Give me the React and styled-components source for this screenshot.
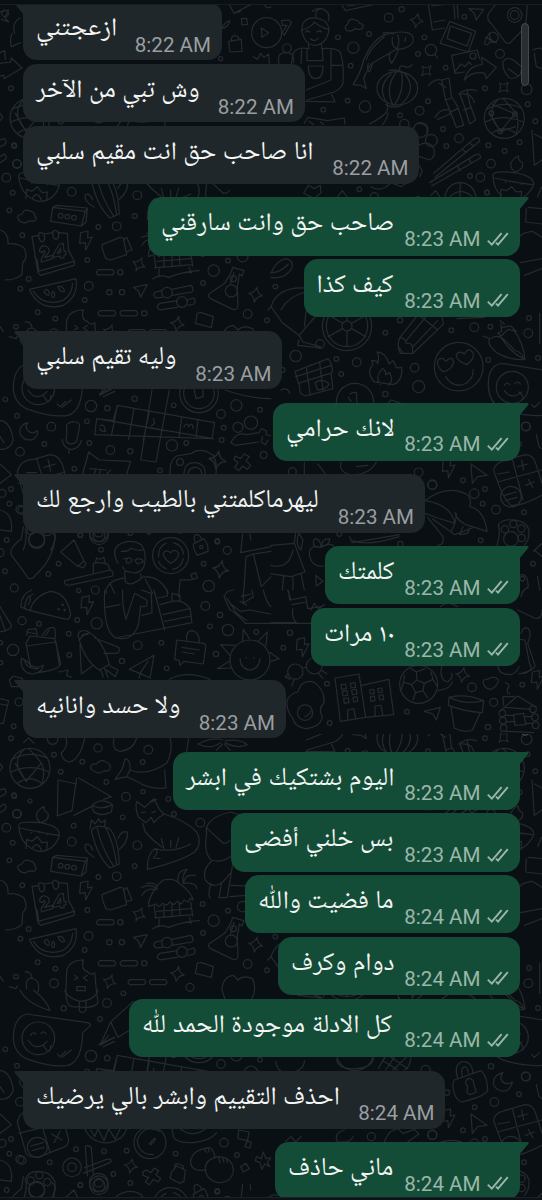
import React from 'react';
import styled, { createGlobalStyle } from 'styled-components';

const messages = [
  { id: 1, text: 'ازعجتني', time: '8:22 AM', width: 198.5, tail: true },
  { id: 2, text: 'وش تبي من الآخر', time: '8:22 AM', width: 281.5 },
  { id: 3, text: 'انا صاحب حق انت مقيم سلبي', time: '8:22 AM', width: 396 },
  { id: 4, text: 'صاحب حق وانت سارقني', time: '8:23 AM', width: 371.5, mine: true, tail: true },
  { id: 5, text: 'كيف كذا', time: '8:23 AM', width: 216, mine: true },
  { id: 6, text: 'وليه تقيم سلبي', time: '8:23 AM', width: 259, tail: true },
  { id: 7, text: 'لانك حرامي', time: '8:23 AM', width: 246.5, mine: true, tail: true },
  { id: 8, text: 'ليهرماكلمتني بالطيب وارجع لك', time: '8:23 AM', width: 401.5, tail: true },
  { id: 9, text: 'كلمتك', time: '8:23 AM', width: 194.5, mine: true, tail: true },
  { id: 10, text: '١٠ مرات', time: '8:23 AM', width: 208.5, mine: true },
  { id: 11, text: 'ولا حسد وانانيه', time: '8:23 AM', width: 262.5, tail: true },
  { id: 12, text: 'اليوم بشتكيك في ابشر', time: '8:23 AM', width: 346.5, mine: true, tail: true },
  { id: 13, text: 'بس خلني أفضى', time: '8:23 AM', width: 288.5, mine: true },
  { id: 14, text: 'ما فضيت واللّٰه', time: '8:24 AM', width: 274.5, mine: true },
  { id: 15, text: 'دوام وكرف', time: '8:24 AM', width: 241.5, mine: true },
  { id: 16, text: 'كل الادلة موجودة الحمد للّٰه', time: '8:24 AM', width: 390.5, mine: true },
  { id: 17, text: 'احذف التقييم وابشر بالي يرضيك', time: '8:24 AM', width: 422, tail: true },
  { id: 18, text: 'ماني حاذف', time: '8:24 AM', width: 244.5, mine: true, tail: true },
];

const Ticks = () => (
  <TickIcon viewBox="0 0 22 15">
    <path d="M.8 8.6 4.8 12.6 14.6 1.2" />
    <path d="M9 10.6 11 12.6 20.8 1.2" />
  </TickIcon>
);

const Tail = ({ mine }) => (
  <TailIcon $mine={mine} viewBox="0 0 10 14">
    <path d={mine ? 'M0 0H8.6Q10.2 .4 9.2 2L0 13Z' : 'M10 0H1.4Q-.2 .4 .8 2L10 13Z'} />
  </TailIcon>
);

const Message = ({ text, time, width, mine, tail }) => (
  <Row $tail={tail} $mine={mine}>
    <Bubble $mine={mine} $tail={tail} $width={width}>
      {tail && <Tail mine={mine} />}
      <Text dir="rtl">{text}</Text>
      <Meta $mine={mine}>
        {time}
        {mine && <Ticks />}
      </Meta>
    </Bubble>
  </Row>
);

const App = () => (
  <Screen>
    <GlobalStyle />
    <Wallpaper />
    <TopEdge />
    <Messages>
      {messages.map((m) => (
        <Message key={m.id} {...m} />
      ))}
    </Messages>
    <Scrollbar />
    <BottomEdge />
  </Screen>
);

export default App;

// ==========================
// Wallpaper
// ==========================

const Dots = ({ list }) => list.map(([x, y, r = 6], i) => <circle key={i} cx={x} cy={y} r={r} />);

const Sparkles = ({ list }) =>
  list.map(([x, y, s = 1, a = 10], i) => (
    <path
      key={i}
      transform={`translate(${x} ${y}) rotate(${a}) scale(${s})`}
      d="M0-24Q4-4 22 0 4 4 0 24-4 4-22 0-4-4 0-24Z"
    />
  ));

const Bolts = ({ list }) =>
  list.map(([x, y], i) => (
    <path key={i} transform={`translate(${x} ${y})`} d="M-16-24 6-29 5-8 19-11-1 28-2 6-19 8Z" />
  ));

const Section = ({ x, y, children }) => (
  <g transform={`translate(${x} ${y}) scale(.3333)`}>{children}</g>
);

const Doodles = () => (
  <g id="doodles" fill="none" stroke="#242a2e" strokeWidth="3.7" strokeLinecap="round" strokeLinejoin="round">
    <Section x={0} y={0}>
      <path d="M688 14 702 40 752 14M702 40 722 34M790 8Q800 30 813 20" />
      <path d="M724 56 740 55 743 73 726 75Z" />
      <circle cx="800" cy="98" r="45" />
      <path d="M784 84 806 98 786 112Z" />
      <path d="M686 124 724 118 726 154 690 156ZM694 120Q694 106 706 107 717 108 716 119M690 63Q680 60 664 86 682 84 690 63M760 170 772 178 782 160 792 172 806 162 808 190" />
      {/* left margin */}
      <path d="M0 36 26 30 14 52 26 66 4 58M60 54Q34 70 44 100M36 100Q28 120 34 140L62 128M0 158 14 152 16 178M0 228 12 226 12 236 66 204 34 174 32 186 0 190" />
      <circle cx="90" cy="355" r="60" />
      <path d="M36 328Q90 300 142 324M32 366Q90 340 148 366M52 400Q90 372 128 402M70 300Q30 340 80 394M86 296Q112 322 126 342 136 370 126 400M46 340 78 394 122 342M0 420 14 416Q22 424 14 434L0 440M0 470 12 462Q22 468 16 478L0 488M0 340 8 352 0 362" />
      <Dots list={[[662, 176, 6], [15, 40, 10], [76, 20, 16], [33, 265, 7], [42, 436, 7], [51, 491, 12]]} />
    </Section>

    <Section x={271} y={0}>
      {/* cook */}
      <path d="M92 90Q94 52 132 54 172 58 174 90M92 90Q100 134 132 136 168 132 174 88 150 84 130 66 120 84 92 90M104 96Q110 90 116 96M138 96Q146 90 152 96M118 116Q132 128 142 114M112 132 114 146M152 130 152 146" />
      <path d="M124 34Q142 20 158 28 180 38 172 62M136 54Q128 30 150 26" />
      <path d="M114 146Q74 140 66 162L60 200M152 146Q200 142 208 158 220 190 216 250 212 264 190 276L108 300M108 146 108 182 156 182 154 146M112 198H156Q156 236 134 236 112 236 112 198M180 150 180 240 106 270M180 278 192 306 104 304M180 196H216M92 150 90 190" />
      <circle cx="48" cy="145" r="13" />
      <path d="M24 190Q16 156 48 158 72 160 68 188" />
      {/* cloud, koi and lantern */}
      <path d="M228 92Q216 82 230 72 234 52 252 60 264 62 266 70 282 72 274 86 262 90 252 86 244 96 228 92ZM32 62 52 60Q68 66 54 80L40 106 34 96 48 76 34 76Z" />
      <path d="M246 254Q268 222 278 180 304 120 342 104 380 92 410 98 430 104 426 126 412 148 376 148L300 192Q288 212 278 234L286 266 270 256ZM286 178Q294 148 340 110M342 104Q330 94 350 98 364 98 368 102M364 112Q360 140 378 146 388 126 380 104M358 156Q350 174 362 190 376 168 382 150M292 190Q286 210 296 216L304 194M404 112 402 124" />
      <ellipse cx="379" cy="265" rx="61" ry="50" />
      <path d="M360 222Q314 264 350 312M376 216Q340 264 366 316M392 218Q402 270 370 316M402 222Q440 268 390 314M354 212Q376 204 404 222M344 314Q370 328 392 316M386 210Q384 196 398 198 412 208 424 194M350 320 348 336Q330 354 296 372M352 340Q344 366 334 374" />
      {/* pictures */}
      <path d="M214 18 224 32 360 2M228 18 336 4M472 12 484 90 520 84M558 10 562 54M482 18 548 10 552 56M488 66 522 60M536 64 614 94 592 156 508 130ZM538 78 602 100 588 138 528 116Z" />
      <path d="M542 166 618 150 626 176M542 166 552 220 580 216M552 214 570 192 582 200 594 186 602 194M580 240Q592 196 634 194L632 172 676 202 646 236 642 220Q604 212 580 240Z" />
      <circle cx="606" cy="168" r="9" />
      <circle cx="480" cy="150" r="17" />
      <path d="M492 162 500 174M594 26 638 28 616 60 610 40Z" />
      <path d="M684 0 652 42Q646 60 662 72L704 128 716 130 760 84Q768 66 768 12M640 130Q650 98 668 96 686 104 680 120 672 132 656 124 650 142 640 130ZM644 112 676 128M656 98Q652 110 664 122M696 188Q700 170 724 178L752 200Q752 240 716 234 694 214 696 188ZM712 206 742 228M786 150Q806 140 813 148M790 160 796 200 813 206" />
      <circle cx="731" cy="45" r="22" />
      <circle cx="731" cy="45" r="13" />
      {/* bamboo */}
      <path d="M472 258Q490 234 512 240L534 234 542 294M512 240 524 300 540 340 556 382 578 376 560 320 544 294M524 262 504 250M524 300 542 294M536 338 560 326M492 352Q510 324 534 330M500 358Q520 350 538 342M566 280 584 330 596 372 614 360 596 310 588 270M564 282Q588 262 616 272M572 282Q604 280 610 308M578 330 600 322" />
      {/* globe */}
      <circle cx="700" cy="355" r="60" />
      <path d="M646 328Q700 300 752 324M642 366Q700 340 758 366M662 400Q700 372 738 402M680 300Q640 340 690 394M696 296Q722 322 736 342 746 370 736 400M656 340 688 394 732 342M690 394 734 380M662 312 734 342" />
      <Dots list={[[661, 340, 7], [688, 394, 7], [732, 342, 7]]} />
      {/* chopsticks and flowers */}
      <path d="M488 520 610 416Q626 408 626 424L492 532M476 548 614 464Q630 458 628 474L482 558M596 430 608 438M574 448 586 458M594 478 600 488M560 500 568 512M440 370Q474 370 468 400M444 436Q470 420 488 444 496 470 476 480L446 470M446 498 454 514 446 530" />
      <circle cx="481" cy="421" r="18" />
      <path d="M783 390 790 496 813 480M790 402 813 414M100 370 110 352 170 362 220 354 222 372M114 364 128 374M148 366 158 374" />
      {/* oil lamp */}
      <path d="M732 516Q716 504 720 488 730 472 742 468 740 480 754 488 760 508 732 516ZM666 528Q664 510 730 518 792 528 788 556 770 592 740 600M666 528Q668 570 692 586M672 534Q720 546 784 554M688 594 690 568 706 572 722 560 736 576 752 574 750 598" />
      <Dots list={[[704, 547, 1], [728, 545, 1], [752, 552, 1]]} />
      <path d="M520 600Q526 548 570 548 612 552 616 600M536 590Q570 560 604 590M568 550 566 600" />
      <path d="M98 580 112 556 130 566 148 556 150 578 130 596ZM300 560Q330 580 360 548L390 560 408 548M200 590 214 572 232 596M480 586 494 572 508 592M450 596Q440 580 430 600" />
      <Dots list={[[353, 53, 13], [392, 28, 8], [294, 102, 7], [201, 112, 7], [247, 143, 17], [239, 197, 7], [230, 302, 7], [282, 320, 17], [157, 329, 7], [387, 346, 7], [446, 332, 13], [471, 304, 7], [441, 162, 7], [460, 112, 7], [524, 203, 7], [580, 50, 7], [687, 161, 13], [642, 265, 7], [767, 268, 16], [770, 313, 7], [516, 387, 7], [564, 415, 13], [526, 438, 7], [652, 436, 7], [701, 453, 7], [660, 491, 13], [597, 528, 7], [628, 532, 13], [746, 427, 7], [793, 364, 7], [648, 577, 7], [449, 390, 22], [400, 372, 14], [265, 568, 7], [310, 590, 12]]} />
      <Sparkles list={[[437, 62, 0.9], [466, 212, 0.85, 45], [698, 262, 0.85, 45]]} />
    </Section>

    <Section x={0} y={140}>
      {/* lamp */}
      <path d="M122 98Q106 86 110 70 120 54 132 50 130 62 144 70 150 90 122 98ZM56 108Q54 92 120 98 182 108 178 138 160 186 116 184 62 170 56 108ZM60 114Q110 126 176 136M78 176 80 148 96 154 112 140 126 158 142 156 140 180M96 176Q112 150 124 180" />
      <Dots list={[[94, 128, 1], [118, 126, 1], [142, 133, 1]]} />
      {/* cactus */}
      <path d="M274 122Q290 98 328 116 354 140 358 222L330 234Q292 200 274 122ZM292 114Q302 170 342 230M316 112Q342 160 350 224M270 116 274 90 286 102 296 86 302 98 316 90 314 110M282 202Q250 182 256 164 270 158 278 180M354 146Q364 120 382 126 386 154 358 178M276 46Q304 20 338 44L334 66Q300 82 280 64ZM276 46Q304 62 338 44M174 -30 172 78 216 62 230 -36M222 76 274 50M174 -30 230 -18M236 -36 334 20 310 28" />
      {/* fox */}
      <path d="M410 34 434 52 462 26 478 58 492 72Q472 84 462 98L454 82 438 98 416 82Q404 54 410 34ZM428 100 436 126Q456 150 486 172M492 72Q560 92 590 126 608 160 584 186 542 214 442 238 442 190 464 176 520 190 572 162M464 176Q480 186 460 204L480 206M484 146 492 176M512 150 512 172M536 144 528 172M424 68 436 66M456 68 466 64M452 36 470 28" />
      {/* small box and cloud */}
      <path d="M158 202 256 214 244 258 152 244ZM158 202 170 196 262 204 256 214M262 204 258 246 244 258M56 240Q46 226 66 222 72 206 88 212 106 218 104 228 116 240 98 244 86 240 78 248 66 250 56 240Z" />
      <Dots list={[[182, 227, 7], [202, 230, 7], [222, 233, 7]]} />
      {/* calendar */}
      <path d="M96 290 116 286M132 282 158 278M176 278 202 280 206 332 224 366 222 376 122 406 114 398 96 290M114 394 222 364M104 350 112 362 116 392M116 280Q126 274 132 284 138 300 126 306 116 304 116 280ZM158 276Q166 266 174 276 180 294 168 298 158 296 158 276Z" />
      <path d="M118 334Q120 316 136 318 152 324 146 338L134 352 158 346V356L124 366V356L136 336Q134 328 126 338ZM160 344 178 312 190 310 192 334 198 334V344L192 346V354H182L180 348 160 352ZM172 340 182 324V338Z" />
      <Bolts list={[[258, 302]]} />
      <path d="M306 314 360 292 370 294 380 344 332 360 318 356Q306 330 306 314ZM370 302 380 292 396 330 382 334" />
      {/* beach hut */}
      <path d="M446 336Q460 292 490 270 526 264 540 282 570 302 580 330L570 326 564 336 552 330 544 342 532 334 522 344 510 336 500 346 488 340 478 350 466 342 446 350ZM462 348 468 384M572 336 578 378M464 384 578 374M478 388 476 410M568 382 574 400M458 416Q480 402 506 412 560 392 598 392M470 364 572 356M492 346V382M516 342V380M538 340 540 376M424 292Q450 280 472 296M426 316Q440 290 470 300M440 280Q464 276 472 290M534 278Q530 240 562 238 544 254 550 280M550 280Q554 252 586 256M552 280Q590 276 590 296" />
      {/* controls */}
      <path d="M296 389H338Q346 397 338 405H294Q284 397 296 389ZM300 512H342Q352 520 342 528H300Q288 520 300 512ZM366 512H408Q418 520 408 528H366Q354 520 366 512ZM390 569H432Q442 576 432 584H390Q378 576 390 569ZM454 569H496Q506 576 496 584H454Q442 576 454 569Z" />
      <path d="M400 442 442 434 422 472 416 454ZM486 452 466 456Q456 466 468 474L488 472M516 448 572 436Q584 446 576 456L516 466M532 482 480 490Q464 502 480 510L532 502M562 480 580 474Q590 482 582 492L564 496" />
      <circle cx="501" cy="458" r="16" />
      <circle cx="546" cy="486" r="16" />
      <path d="M698 382 732 392 726 408 718 402 712 440 714 498Q712 514 694 506L632 476Q620 466 630 460L674 430 694 396ZM702 398 692 430" />
      <circle cx="694" cy="453" r="18" />
      <circle cx="700" cy="416" r="9" />
      {/* watermelon */}
      <path d="M88 448 228 416Q236 470 190 496 118 516 88 448ZM100 454Q130 500 188 482 216 466 218 430M132 456Q140 440 148 458 148 476 132 456ZM158 454Q168 460 162 472 150 474 158 454ZM174 440Q190 436 194 454 182 460 174 440Z" />
      {/* tree and tent */}
      <path d="M0 270Q26 276 24 312 48 308 72 324 86 352 68 368 66 400 66 404 44 420 16 420 0 420M36 376Q34 352 0 350M0 420 18 418V446L84 522 0 534M0 468Q12 464 24 472L40 470" />
      {/* ice cream */}
      <path d="M198 600 200 540Q210 510 250 510 242 540 262 544 270 558 284 548L290 610 294 636Q290 650 260 652L216 650Q196 646 198 600M224 556 234 564 222 570M262 556 250 564 262 572M230 590H256V602H230ZM590 532Q588 516 604 518L640 530 634 562 586 550ZM0 560 10 574M28 590 48 596 52 588M80 596Q74 566 96 564 122 572 114 606M76 546Q92 544 96 562M666 600Q668 560 700 556 712 568 714 570 730 554 758 566 772 600 754 630L714 660 676 630Z" />
      {/* tulip lady */}
      <path d="M620 130Q612 86 690 66L740 80M618 112 670 160Q684 160 690 150M620 130Q610 190 634 210 662 220 690 200M634 214Q606 240 616 270 650 310 690 250M700 210 682 322 657 324 664 280M692 286 740 288M632 280Q622 322 632 324M690 320 740 316M804 510 813 500" />
      <Dots list={[[43, 18, 7], [90, 33, 6], [51, 72, 13], [19, 113, 13], [38, 158, 7], [28, 211, 7], [67, 286, 7], [215, 155, 13], [221, 107, 7], [368, 82, 7], [378, 20, 13], [429, 5, 6], [505, 27, 7], [522, 72, 7], [601, 98, 13], [412, 166, 13], [404, 228, 7], [350, 259, 13], [295, 261, 7], [262, 360, 7], [361, 397, 8], [86, 417, 7], [61, 446, 7], [266, 438, 13], [254, 480, 7], [328, 457, 8], [366, 457, 8], [433, 520, 8], [113, 517, 7], [166, 536, 7], [48, 560, 7], [162, 580, 13], [608, 342, 7], [641, 392, 17], [684, 362, 7], [609, 429, 7], [743, 522, 13], [801, 541, 7], [570, 592, 12], [728, 350, 16]]} />
      <Sparkles list={[[417, 373, 0.9, 25], [329, 575, 0.9, 20], [532, 552, 0.95], [767, 464, 0.95]]} />
    </Section>

    <Section x={271} y={190}>
      <path d="M0 250Q16 212 44 206 70 212 62 236 40 270 0 262M4 248Q30 246 52 222M0 350Q20 290 100 294M0 350 34 398 84 436 150 360M30 360Q50 320 102 306M84 436 96 456 148 470M106 360 100 410M84 450 80 466 150 474" />
      <circle cx="147" cy="462" r="13" />
      <circle cx="228" cy="408" r="74" />
      <circle cx="228" cy="408" r="62" />
      <circle cx="228" cy="408" r="15" />
      <path d="M228 393V346M228 423V470M215 400 174 376M242 400 282 378M215 416 172 440M242 416 284 440" />
      <path d="M386 444 460 350Q520 354 516 404L426 490 388 490Q376 468 386 444ZM386 444Q402 440 406 460 426 458 424 476L426 490M404 454 470 374M424 472 500 392M440 372 500 420M384 472 396 490M558 386 640 382M806 370V460" />
      {/* gift */}
      <path d="M72 544 172 506Q186 526 184 548L82 580 72 544ZM84 580 88 610 104 618 186 596 180 550M106 532 118 616M146 516 156 600M74 560 182 526M132 578Q156 562 174 582 168 598 140 600Z" />
      {/* fire */}
      <path d="M310 576Q284 546 306 524L302 512Q320 510 320 522 326 498 318 486 344 488 354 522L366 512Q372 520 376 534L392 532Q396 574 366 584ZM328 584Q310 560 334 536 344 538 344 554L356 548Q370 572 352 586" />
      {/* heart eyes */}
      <circle cx="563" cy="530" r="73" />
      <path d="M518 546Q496 532 500 512 512 498 524 514 544 496 548 516 544 538 518 546ZM588 524Q556 514 556 494 566 480 580 492 594 470 606 488 612 506 588 524ZM524 560Q548 598 586 580 610 560 606 538" />
      {/* chilies */}
      <path d="M636 438 656 446Q650 460 660 470 680 504 756 510 760 490 730 480 706 454 690 442 672 434 660 446M690 402 692 424 680 430 690 438 712 418 736 424 720 408 694 412M690 442Q720 490 762 508 758 460 728 420M700 402 688 392" />
      <path d="M813 540 694 520Q650 524 652 590 656 640 692 658 750 680 813 676" />
      <circle cx="724" cy="592" r="48" />
      <path d="M700 586Q708 574 716 584M732 580Q742 572 748 582M700 602Q720 632 752 606M744 606Q764 624 752 630M782 644 790 652 806 638" />
      <circle cx="252" cy="636" r="56" />
      <path d="M236 612Q246 606 256 608L258 640M232 622 240 634M30 600Q50 590 56 610" />
      <path d="M740 152Q744 128 784 124L813 142M772 52 813 56M766 56 764 96 813 102M800 20 812 -8M748 218 813 206M760 256 813 236" />
      <Dots list={[[74, 498, 17], [257, 517, 13], [196, 507, 7], [211, 552, 7], [343, 428, 7], [431, 533, 13], [443, 590, 18], [541, 421, 7], [610, 412, 13], [658, 410, 7], [652, 510, 7], [774, 384, 7], [772, 430, 13], [801, 504, 7], [13, 290, 7], [387, 391, 8], [35, 540, 7], [343, 612, 8], [648, 8, 7]]} />
    </Section>

    <Section x={0} y={390}>
      {/* crossword */}
      <path d="M352 46 644 98 636 146 284 134 290 86 340 92ZM352 46 334 138M402 56 386 148M456 0 422 210 468 216 508 0M448 64 430 150M545 82 538 140M594 90 588 142M290 86 640 146M340 94 494 122" />
      <path d="M300 108Q314 98 316 124 302 126 300 116M460 86 464 100 454 108M552 110Q560 94 566 110 576 92 580 116M298 12 344 -8M310 20 344 4" />
      <circle cx="597" cy="10" r="58" />
      <circle cx="597" cy="10" r="46" />
      <path d="M582 -4 608 -8 610 20 588 26Z" />
      {/* mic, moon and numbers */}
      <path d="M84 98Q56 104 60 132 74 156 100 148 116 136 112 122 98 134 86 124 72 112 84 98ZM200 104Q212 92 228 96 242 100 238 114L230 154Q218 166 206 160 194 154 200 138ZM186 148Q192 180 218 178 240 172 244 152M208 180 206 190M0 92Q30 92 40 150 30 180 0 178M0 140 12 158" />
      <path d="M52 246Q60 210 100 208L150 194Q186 196 194 252L206 300Q206 320 180 326L120 350Q90 356 78 340L52 246M110 206 150 336M80 248H110M132 232 166 222M144 208 152 244M56 280 196 246M154 282 186 300M180 274 162 308M0 222 34 254 0 280" />
      <circle cx="112" cy="322" r="30" />
      <path d="M92 318 130 308M96 332 132 322" />
      <path d="M248 252 266 186 298 210 344 212 392 214 380 252M270 236 320 240M288 238 282 252M302 240 298 252M332 240 320 252" />
      <path d="M510 252Q508 210 530 198L576 190Q590 176 618 184L640 196Q652 220 648 252M552 252Q554 214 588 218 616 222 616 252M564 252Q568 230 588 232 604 234 606 252M704 142 692 158 706 166 776 156M704 142Q716 126 740 134L776 128 786 116 800 124 798 134 812 138M788 140 784 156 796 164 804 150" />
      <path d="M706 198 722 206 732 192 748 200 738 212 752 226 742 238 728 228 716 242 704 232 714 218 702 208ZM676 0Q740 24 813 26M0 360Q40 370 34 424L0 420" />
      {/* trowel, tube and toothbrush */}
      <path d="M70 410 64 446Q30 470 32 492L86 566Q100 568 106 556 160 508 166 440L156 428M182 486 222 450 252 512 234 530ZM232 526 250 534 258 520M250 512 258 520M194 572 330 540Q342 544 338 558L206 586Q190 584 194 572ZM280 548V520Q300 514 324 524L330 540M286 518 290 504 300 508 312 502 316 520" />
      <circle cx="110" cy="448" r="24" />
      {/* boy */}
      <path d="M354 520Q334 484 354 466 390 444 424 464 442 490 432 530 416 556 390 546 372 546 368 530M364 484Q384 486 394 474 414 486 432 478M372 506H382M382 504Q394 500 396 512 388 524 378 516ZM404 510 414 506 426 508 430 516 412 522ZM374 546 376 574Q390 594 424 564L422 552M376 564Q318 570 318 610M424 562Q480 554 504 610M436 568 458 610M330 580 344 610" />
      <circle cx="512" cy="497" r="54" />
      <path d="M476 500Q474 470 498 460M520 458Q548 466 550 492M550 506Q544 534 518 538M498 536Q480 528 476 514M512 520Q490 506 490 490 496 476 512 488 526 474 536 490 536 508 512 520Z" />
      <path d="M580 462 612 446Q626 464 624 484L592 496Q580 480 580 462ZM586 458Q576 432 592 434 604 438 604 450" />
      <circle cx="604" cy="471" r="5" />
      <path d="M728 432 722 488 813 470M750 432 752 450M732 600 738 500 760 492 784 590 813 560M760 492 813 484M572 554 588 548 592 564 578 568ZM574 570H540L536 620" />
      <circle cx="753" cy="98" r="20" />
      <circle cx="714" cy="112" r="15" />
      <circle cx="297" cy="436" r="18" />
      <circle cx="297" cy="436" r="28" />
      <Dots list={[[16, 28, 7], [51, 77, 7], [154, 110, 13], [133, 162, 7], [60, 185, 13], [273, 48, 17], [322, 55, 8], [261, 94, 7], [268, 159, 7], [331, 180, 13], [391, 184, 8], [404, 26, 8], [516, 166, 17], [521, 46, 7], [559, 159, 7], [663, 72, 13], [709, 46, 17], [780, 59, 7], [671, 113, 7], [665, 150, 7], [791, 195, 10], [480, 241, 7], [540, 216, 10], [223, 236, 7], [33, 297, 7], [6, 310, 12], [20, 450, 7], [0, 488, 12], [15, 544, 7], [145, 552, 7], [176, 521, 7], [303, 479, 7], [241, 435, 7], [652, 453, 7], [682, 481, 12], [611, 521, 7], [626, 588, 17], [43, 594, 12], [60, 358, 12]]} />
      <Sparkles list={[[652, 210, 1.15], [662, 538, 1.1]]} />
    </Section>

    <Section x={0} y={340}>
      {/* speech bubble with a face */}
      <path d="M80 72 262 98Q276 102 268 110L248 128Q246 214 204 226 160 234 84 208 40 190 40 140 42 82 80 72ZM172 192 180 200 198 184M186 202 214 180" />
      <circle cx="115" cy="145" r="49" />
      <path d="M92 136Q98 124 108 132M122 130Q132 120 138 132M84 150Q108 188 142 154M130 166 142 184Q154 184 152 166" />
      <path d="M194 0Q200 24 240 34 286 30 294 0M238 34V62Q248 74 258 60V32M60 0Q80 40 150 62 140 30 100 0M400 34 332 96 354 142 390 120M332 96 300 166 344 142M302 164 326 136" />
      <path d="M254 416Q276 462 330 458 372 448 380 416M272 420 284 440 294 416 312 452 326 416 346 448 360 416M516 416 520 440Q530 460 580 458 632 452 650 428M540 416Q580 446 616 416" />
      <circle cx="450" cy="458" r="48" />
      <path d="M480 424Q430 400 412 450 414 494 460 494M448 462 462 446Q470 442 462 454L452 464Z" />
      {/* scissors */}
      <path d="M256 470Q264 462 274 474L280 552M256 470 262 558M252 534 320 508Q340 506 330 518L250 550" />
      <circle cx="216" cy="532" r="28" />
      <circle cx="216" cy="532" r="13" />
      <circle cx="296" cy="578" r="28" />
      <circle cx="296" cy="578" r="13" />
      <path d="M440 540 452 548 464 534 476 542 468 554 482 566 474 576 460 568 448 584 436 576 446 562 428 556 430 544ZM516 544 530 528 556 540 552 574 538 580 510 564ZM524 532Q522 520 536 522 554 526 550 538" />
      {/* dumplings */}
      <path d="M618 540Q570 548 572 510 580 482 612 476 640 464 644 500M616 534Q618 506 656 500 702 504 700 548 690 580 654 578 616 568 616 534ZM612 476 620 488M624 474 628 486M656 500 660 518M668 504 672 516M680 504 682 518" />
      <path d="M716 420 748 426 742 452 714 446ZM742 452 754 458 750 474 734 470ZM722 530 738 520 748 536 730 546ZM770 500 784 506 790 486 798 506 812 504 802 518 810 530 794 522 786 538 780 518 766 512Z" />
      {/* paw */}
      <path d="M70 630Q84 590 76 568 84 544 114 544 152 544 164 574 170 600 152 630" />
      <circle cx="110" cy="601" r="24" />
      <Dots list={[[92, 572, 11], [118, 556, 11], [142, 576, 11]]} />
      <Dots list={[[228, 478, 7], [312, 484, 7], [380, 482, 7], [340, 552, 7], [241, 586, 7], [391, 579, 7], [527, 491, 7], [711, 495, 7], [672, 458, 13], [149, 517, 7], [66, 511, 12], [28, 491, 7], [321, 39, 13], [370, 10, 7], [191, 55, 8], [300, 87, 7], [652, 605, 7]]} />
      <Sparkles list={[[393, 528, 0.9]]} />
    </Section>

    <Section x={271} y={340}>
      {/* padlock */}
      <path d="M550 270 630 242Q650 260 650 302 640 320 572 336 556 330 550 310 542 284 550 270ZM560 264Q548 228 570 216 602 210 606 248M574 258Q568 234 580 230 592 232 592 250M590 290Q578 276 590 266 608 264 608 280L616 306 598 314 588 308Z" />
      <path d="M696 248Q664 256 668 284 680 308 708 302 722 290 724 276 704 288 692 272 686 260 696 248Z" />
      <Bolts list={[[533, 386]]} />
      <path d="M600 372 648 406 620 410 604 430Z" />
      <path d="M668 392Q670 370 700 362L762 344Q786 344 794 370L813 430M668 392 690 452Q696 470 720 496 750 500 813 466M724 356 756 480M680 402 716 396M680 426 813 390M740 380 770 372M752 360 758 390M764 436 790 426M772 418 786 444" />
      <path d="M322 236Q340 200 360 180L420 200Q416 236 400 240M336 212 380 240M350 194 410 236M380 188 344 240M408 200 366 240M14 214Q20 254 60 248 100 240 100 212M196 210Q206 240 250 236 300 236 308 204M340 456Q352 420 380 416L396 430 430 418 444 432 410 456M220 420Q186 430 200 456 240 460 246 440M44 454 60 440 74 456 90 440" />
      <Dots list={[[528, 308, 8], [660, 229, 8], [764, 259, 13], [744, 313, 7], [670, 336, 13], [611, 352, 7], [484, 435, 13], [576, 421, 7], [301, 440, 12], [464, 240, 14]]} />
    </Section>

    <Section x={271} y={390}>
      <path d="M796 134 804 170 813 176" />
      <circle cx="720" cy="320" r="31" />
      <path d="M700 316 736 306M704 332 738 322" />
      {/* mushrooms */}
      <path d="M462 332Q530 280 592 316 602 334 596 350M596 350Q640 360 648 424L604 410Q560 400 552 368M462 332Q540 344 552 400L500 384 462 370M470 382 516 440Q520 466 500 466M484 386 552 434 604 414M556 370Q556 400 540 424M576 410 566 434 590 430 596 414" />
      {/* paw */}
      <path d="M678 466Q690 430 682 404 696 386 724 390 766 392 774 420 776 450 760 466" />
      <circle cx="720" cy="447" r="22" />
      <Dots list={[[702, 418, 11], [727, 402, 11], [751, 416, 11], [752, 444, 11]]} />
      <path d="M236 440 244 458 386 434M246 452Q290 470 384 440M100 218V250M140 222 162 250M210 216Q200 248 246 256 300 250 316 216M256 230 290 226" />
      {/* apple and dress */}
      <path d="M150 472Q110 462 116 500 126 534 158 528M150 472Q180 456 190 470M150 470Q148 450 138 448 126 440 128 466 140 474 150 470ZM154 468Q150 446 176 446 176 466 154 468M84 430Q70 460 90 480L96 450ZM0 466 70 460 102 546 60 560 0 552M70 460 74 430M0 526Q54 540 66 480M38 556 34 600M66 560V600M90 552 100 600M134 556 156 574 136 588Z" />
      <path d="M790 480 813 500M788 484 813 460M800 560 806 600M746 556Q770 546 772 590" />
      <Dots list={[[443, 247, 13], [484, 284, 14], [610, 311, 14], [642, 297, 7], [635, 341, 7], [675, 359, 13], [629, 451, 7], [759, 367, 7], [765, 110, 13], [205, 432, 7], [388, 462, 8], [786, 521, 7], [754, 566, 7], [64, 245, 12]]} />
    </Section>

    <Section x={0} y={590}>
      {/* taco */}
      <path d="M62 50Q64 10 96 0M62 50 74 56 90 62Q100 20 150 4 200 6 212 72 208 90 200 88L90 62M74 56Q74 20 100 12M84 44Q94 34 90 20" />
      <Dots list={[[176, 58, 2], [188, 44, 2], [194, 60, 2], [236, 2, 6]]} />
      <Bolts list={[[262, 46]]} />
      {/* student and cake */}
      <path d="M314 0Q308 130 350 144 400 156 416 100L422 48M318 52 360 44M368 0Q366 50 378 88L404 10M404 10 440 30Q446 56 422 48M424 0 454 10 456 68 426 76M462 0 494 120M346 144 576 98 570 56 488 74M570 56Q550 28 516 34L480 44M474 24 502 18V0M494 94 574 78M516 34V10L540 16V34" />
      {/* shoe */}
      <path d="M672 20Q680 0 700 0M672 20 690 60Q704 64 736 100H813M690 40 720 64 750 60 813 72M724 20 752 12M730 0V40L760 20M756 0 760 22M720 34 740 46M680 24 710 70 740 92M790 0Q800 40 813 50" />
      <path d="M0 50 34 106Q36 120 0 126M0 76 16 124" />
      {/* backpack */}
      <path d="M78 160 90 138 164 146 182 220Q180 240 110 248M78 160 92 230M78 168 168 156 178 226M80 136 84 118 108 116 112 138M80 126 110 132M126 138Q140 110 162 112 170 130 164 146M136 136 148 120M64 204Q60 250 100 252 128 246 130 226 100 242 82 214 72 210 64 204ZM74 212Q82 240 116 236" />
      {/* rocket */}
      <path d="M234 134Q240 116 262 124 310 150 328 224L298 240Q250 210 234 134ZM246 136Q254 130 264 134M238 152Q244 136 268 128M284 144 356 172Q362 184 350 190L312 190M240 164 244 252 280 226M302 240 310 260M314 236 324 262M330 228 354 240 346 260 320 240" />
      <path d="M388 238 462 196 450 264 420 250ZM420 250 444 214M420 250 418 264M176 246 204 240 200 256 214 262M28 270 40 258 68 266 60 290 34 290Z" />
      <path d="M530 150 612 160Q620 166 616 180L610 222 552 214 540 226 538 212 524 208ZM560 152Q556 122 578 122 598 128 598 156M546 172 598 180M546 186 584 192" />
      {/* sun */}
      <circle cx="750" cy="210" r="60" />
      <path d="M720 206Q722 238 750 240 778 236 780 206M738 202V204M762 202V204M706 166 662 164 690 196M728 152 730 118 748 146M774 154 802 126 798 168M690 212 652 236 692 234M808 190 813 188" />
      <path d="M508 268Q560 240 630 268" />
      <path d="M0 326 26 332 10 400 0 400M0 342 22 346" />
      <Dots list={[[66, 92, 12], [117, 101, 7], [39, 180, 17], [206, 131, 7], [208, 195, 7], [232, 90, 7], [290, 100, 17], [413, 166, 13], [484, 158, 7], [366, 213, 8], [500, 235, 7], [616, 48, 13], [660, 75, 8], [630, 109, 7], [684, 120, 17], [648, 192, 8], [769, 126, 7], [57, 336, 12], [41, 409, 7], [2, 158, 6], [2, 218, 6], [286, 0, 12]]} />
    </Section>

    {/* stocking and whale */}
    <Section x={0} y={-60}>
      <path d="M198 444Q206 470 184 488 184 510 208 516 240 510 254 444M342 444Q334 480 360 484 400 480 410 444M346 568 366 538 376 506Q392 510 390 540 440 560 500 520 520 480 510 444M346 568 380 560 410 574Q450 600 498 594L494 540M390 540 382 556M566 444 560 484M272 536Q270 520 290 522 300 506 318 516 334 522 330 536 326 546 312 542 296 558 272 536Z" />
      <path d="M668 450Q640 440 594 462 630 480 662 458M676 452Q720 446 742 464 710 478 676 458M668 462 650 480M674 462 690 480M70 458 86 444 102 460" />
      <Dots list={[[158, 447, 16], [162, 494, 7], [182, 545, 7], [247, 515, 7], [294, 474, 12], [319, 576, 7], [445, 479, 13], [428, 516, 7]]} />
    </Section>

    <Section x={271} y={590}>
      <path d="M50 0 60 30 104 20 110 56 150 50M66 56Q60 80 76 98H0M0 100H160M56 30 52 0M62 44 106 36M120 60 130 40 142 56 160 44M508 50Q530 30 560 50M750 20Q754 0 770 -8M740 60 790 84Q813 90 813 60" />
      {/* glasses */}
      <circle cx="73" cy="245" r="23" />
      <circle cx="130" cy="228" r="24" />
      <path d="M94 234 106 232M52 252 42 260 58 268M70 268 62 288M150 240 168 252M142 250 156 266" />
      {/* egg */}
      <path d="M90 284Q120 264 140 286 164 310 158 340 140 356 154 380 148 412 104 416 70 410 66 386 44 360 48 330 60 310 80 306ZM102 380Q120 370 120 362" />
      <circle cx="102" cy="368" r="23" />
      {/* houses */}
      <path d="M192 264 264 252 284 382 208 394ZM272 286 354 268 368 374 284 382M230 390V360L248 356 254 386M312 380V348L330 346 336 378M210 284 224 282 226 296 212 298ZM238 280 252 278 254 292 240 294ZM214 304 228 302 230 316 216 318ZM242 300 256 298 258 312 244 314ZM218 326 232 324 234 338 220 340ZM246 322 258 320 260 334 248 336ZM296 300 308 298 310 310 298 312ZM320 296 332 294 334 306 322 308ZM298 320 310 318 312 332 300 334ZM324 316 336 314 338 328 326 330Z" />
      {/* football */}
      <circle cx="443" cy="283" r="57" />
      <path d="M422 284 438 270 460 280 456 302 434 308ZM438 270 436 246 420 236M436 246 462 236M460 280 486 268M486 268 480 246M486 268 498 288M456 302 470 324M434 308 426 330M422 284 398 276 400 256M398 276 390 300M512 230Q504 270 530 276 548 262 542 250M502 302Q540 296 544 276" />
      {/* plant pot and log cabin */}
      <path d="M534 322Q584 310 638 332L634 368Q580 364 532 346ZM534 322Q584 346 638 332M540 352 550 414Q580 430 604 420L628 368M460 364 508 352 496 390 486 372ZM638 282Q634 266 650 268 672 254 682 270 680 290 660 298 644 298 638 282Z" />
      <path d="M696 320H730M696 322 698 346M688 362 740 318 796 352M700 352 780 358M704 376H730M728 374 758 370 764 404 732 406ZM704 396 732 394M762 380H784M764 400H786M702 424 788 428M690 428 682 456 712 452 706 430M704 278Q720 284 710 296 706 310 716 312" />
      <Dots list={[[694, 370, 10], [696, 392, 10], [698, 414, 10], [786, 358, 10], [792, 382, 10], [794, 406, 10]]} />
      <Bolts list={[[95, 172], [800, 270]]} />
      <path d="M0 190 24 206 0 214M680 226Q684 256 720 254 738 248 744 230M744 148 762 150 776 222Q790 240 760 250M750 130Q756 108 772 116 784 130 770 160L792 226Q794 240 744 252" />
      <Dots list={[[57, 128, 8], [37, 173, 7], [168, 281, 7], [176, 399, 7], [408, 365, 7], [603, 292, 13], [668, 337, 12], [754, 284, 7], [651, 411, 8]]} />
      <Sparkles list={[[575, 255, 0.95]]} />
    </Section>
  </g>
);

const Wallpaper = () => (
  <WallpaperArt viewBox="0 0 542 1200">
    <defs>
      <Doodles />
    </defs>
    <svg width="542" height="734">
      <use href="#doodles" />
    </svg>
    <svg y="734" width="542" height="466" viewBox="0 84 542 466">
      <use href="#doodles" />
    </svg>
    <path d="M522 734.5Q525 736 528 734.5" fill="none" stroke="#4b5053" />
  </WallpaperArt>
);

// ==========================
// Styles
// ==========================

const GlobalStyle = createGlobalStyle`
  * {
    box-sizing: border-box;
  }

  body {
    margin: 0;
    background: #0a0f13;
  }
`;

const Screen = styled.div`
  position: relative;
  width: 542px;
  height: 1200px;
  overflow: hidden;
  background: #0a0f13;
  font-family: Roboto, 'Noto Naskh Arabic UI', 'Noto Naskh Arabic', 'Noto Sans Arabic', 'DejaVu Sans', sans-serif;
`;

const WallpaperArt = styled.svg`
  position: absolute;
  inset: 0;
  width: 542px;
  height: 1200px;
`;

const TopEdge = styled.div`
  position: absolute;
  z-index: 2;
  top: 0;
  left: 0;
  right: 0;
  height: 5px;
  background: #0a0f13;
  border-bottom: 1px solid #171d21;
`;

const BottomEdge = styled.div`
  position: absolute;
  z-index: 2;
  left: 0;
  right: 0;
  bottom: 0;
  height: 3px;
  background: #0c1216;
  border-top: 1px solid #182125;
`;

const Messages = styled.div`
  position: relative;
  display: flex;
  flex-direction: column;
  padding: 2px 22.5px 0 23px;
`;

const Row = styled.div`
  display: flex;
  justify-content: ${({ $mine }) => ($mine ? 'flex-end' : 'flex-start')};
  margin-top: ${({ $tail }) => ($tail ? '13.6px' : '3.6px')};

  &:first-child {
    margin-top: 0;
  }
`;

const Bubble = styled.div`
  position: relative;
  display: flex;
  justify-content: space-between;
  width: ${({ $width }) => $width}px;
  height: 58.2px;
  padding: 0 ${({ $mine }) => ($mine ? '11px' : '10.5px')} 0 13px;
  border-radius: 14px;
  ${({ $tail, $mine }) => $tail && ($mine ? 'border-top-right-radius: 0;' : 'border-top-left-radius: 0;')}
  background: ${({ $mine }) => ($mine ? '#144d37' : '#1f272a')};
`;

const TailIcon = styled.svg`
  position: absolute;
  top: 0;
  ${({ $mine }) => ($mine ? 'right: -9.5px' : 'left: -9.5px')};
  width: 10px;
  height: 14px;
  fill: ${({ $mine }) => ($mine ? '#144d37' : '#1f272a')};
`;

const Text = styled.span`
  color: #f2f5f4;
  font-size: 25.9px;
  line-height: 57px;
  white-space: nowrap;
`;

const Meta = styled.span`
  display: flex;
  align-self: flex-end;
  align-items: center;
  gap: 6px;
  padding-bottom: ${({ $mine }) => ($mine ? '4.5px' : '3.4px')};
  color: ${({ $mine }) => ($mine ? '#9bb7aa' : '#9a9ea0')};
  font-family: Roboto, sans-serif;
  font-size: 20.6px;
  line-height: 24px;
  white-space: nowrap;
`;

const TickIcon = styled.svg`
  width: 22px;
  height: 15px;
  fill: none;
  stroke: #9bb7aa;
  stroke-width: 1.9;
`;

const Scrollbar = styled.div`
  position: absolute;
  top: 23px;
  right: 13px;
  width: 8px;
  height: 63px;
  border: 1px solid #43484b;
  border-radius: 4px;
  background: #292e31;
`;
